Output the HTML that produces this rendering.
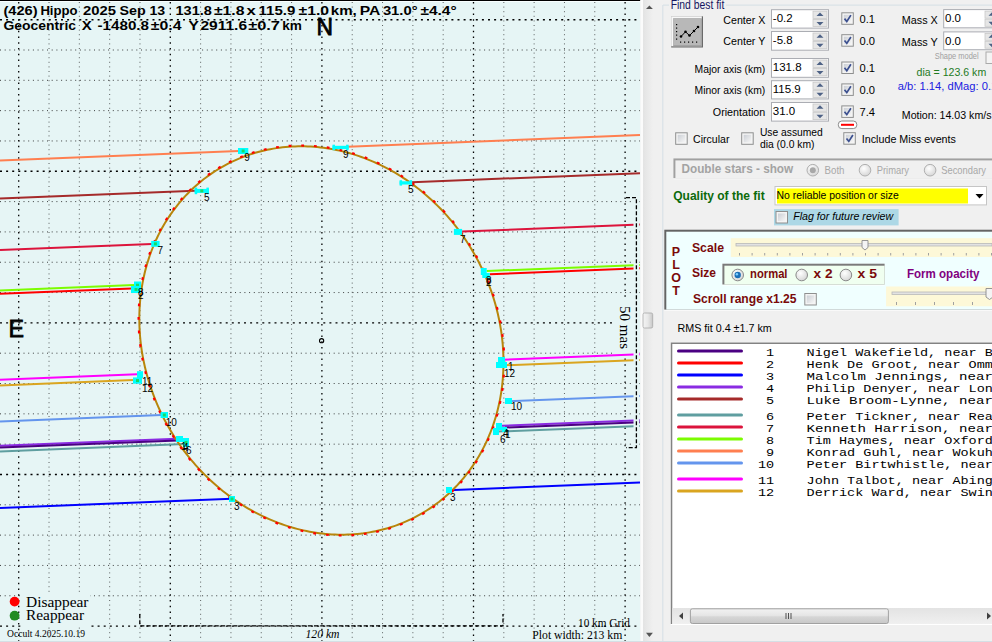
<!DOCTYPE html><html><head><meta charset="utf-8"><style>html,body{margin:0;padding:0;background:#f0f0f0;width:992px;height:642px;overflow:hidden}svg{display:block}</style></head><body>
<div style="position:relative;width:992px;height:642px">
<svg width="641" height="641" viewBox="0 0 641 641" style="position:absolute;left:0;top:0">
<rect x="0" y="0" width="640.5" height="641" fill="#e6f5f5"/>
<rect x="0" y="0" width="640.5" height="1" fill="#000"/>
<rect x="0" y="1" width="640.5" height="1" fill="#f8ffff"/>
<line x1="49.02" y1="2" x2="49.02" y2="641" stroke="#222" stroke-width="1" stroke-dasharray="1 3.6" opacity="0.7"/>
<line x1="0" y1="50" x2="640" y2="50" stroke="#222" stroke-width="1" stroke-dasharray="1 3.7" opacity="0.85"/>
<line x1="79.34" y1="2" x2="79.34" y2="641" stroke="#222" stroke-width="1" stroke-dasharray="1 3.6" opacity="0.7"/>
<line x1="0" y1="80.32" x2="640" y2="80.32" stroke="#222" stroke-width="1" stroke-dasharray="1 3.7" opacity="0.85"/>
<line x1="109.66" y1="2" x2="109.66" y2="641" stroke="#222" stroke-width="1" stroke-dasharray="1 3.6" opacity="0.7"/>
<line x1="0" y1="110.64" x2="640" y2="110.64" stroke="#222" stroke-width="1" stroke-dasharray="1 3.7" opacity="0.85"/>
<line x1="139.98" y1="2" x2="139.98" y2="641" stroke="#222" stroke-width="1" stroke-dasharray="1 3.6" opacity="0.7"/>
<line x1="0" y1="140.96" x2="640" y2="140.96" stroke="#222" stroke-width="1" stroke-dasharray="1 3.7" opacity="0.85"/>
<line x1="200.62" y1="2" x2="200.62" y2="641" stroke="#222" stroke-width="1" stroke-dasharray="1 3.6" opacity="0.7"/>
<line x1="0" y1="201.6" x2="640" y2="201.6" stroke="#222" stroke-width="1" stroke-dasharray="1 3.7" opacity="0.85"/>
<line x1="230.94" y1="2" x2="230.94" y2="641" stroke="#222" stroke-width="1" stroke-dasharray="1 3.6" opacity="0.7"/>
<line x1="0" y1="231.92" x2="640" y2="231.92" stroke="#222" stroke-width="1" stroke-dasharray="1 3.7" opacity="0.85"/>
<line x1="261.26" y1="2" x2="261.26" y2="641" stroke="#222" stroke-width="1" stroke-dasharray="1 3.6" opacity="0.7"/>
<line x1="0" y1="262.24" x2="640" y2="262.24" stroke="#222" stroke-width="1" stroke-dasharray="1 3.7" opacity="0.85"/>
<line x1="291.58" y1="2" x2="291.58" y2="641" stroke="#222" stroke-width="1" stroke-dasharray="1 3.6" opacity="0.7"/>
<line x1="0" y1="292.56" x2="640" y2="292.56" stroke="#222" stroke-width="1" stroke-dasharray="1 3.7" opacity="0.85"/>
<line x1="352.22" y1="2" x2="352.22" y2="641" stroke="#222" stroke-width="1" stroke-dasharray="1 3.6" opacity="0.7"/>
<line x1="0" y1="353.2" x2="640" y2="353.2" stroke="#222" stroke-width="1" stroke-dasharray="1 3.7" opacity="0.85"/>
<line x1="382.54" y1="2" x2="382.54" y2="641" stroke="#222" stroke-width="1" stroke-dasharray="1 3.6" opacity="0.7"/>
<line x1="0" y1="383.52" x2="640" y2="383.52" stroke="#222" stroke-width="1" stroke-dasharray="1 3.7" opacity="0.85"/>
<line x1="412.86" y1="2" x2="412.86" y2="641" stroke="#222" stroke-width="1" stroke-dasharray="1 3.6" opacity="0.7"/>
<line x1="0" y1="413.84" x2="640" y2="413.84" stroke="#222" stroke-width="1" stroke-dasharray="1 3.7" opacity="0.85"/>
<line x1="443.18" y1="2" x2="443.18" y2="641" stroke="#222" stroke-width="1" stroke-dasharray="1 3.6" opacity="0.7"/>
<line x1="0" y1="444.16" x2="640" y2="444.16" stroke="#222" stroke-width="1" stroke-dasharray="1 3.7" opacity="0.85"/>
<line x1="503.82" y1="2" x2="503.82" y2="641" stroke="#222" stroke-width="1" stroke-dasharray="1 3.6" opacity="0.7"/>
<line x1="0" y1="504.8" x2="640" y2="504.8" stroke="#222" stroke-width="1" stroke-dasharray="1 3.7" opacity="0.85"/>
<line x1="534.14" y1="2" x2="534.14" y2="641" stroke="#222" stroke-width="1" stroke-dasharray="1 3.6" opacity="0.7"/>
<line x1="0" y1="535.12" x2="640" y2="535.12" stroke="#222" stroke-width="1" stroke-dasharray="1 3.7" opacity="0.85"/>
<line x1="564.46" y1="2" x2="564.46" y2="641" stroke="#222" stroke-width="1" stroke-dasharray="1 3.6" opacity="0.7"/>
<line x1="0" y1="565.44" x2="640" y2="565.44" stroke="#222" stroke-width="1" stroke-dasharray="1 3.7" opacity="0.85"/>
<line x1="594.78" y1="2" x2="594.78" y2="641" stroke="#222" stroke-width="1" stroke-dasharray="1 3.6" opacity="0.7"/>
<line x1="0" y1="595.76" x2="640" y2="595.76" stroke="#222" stroke-width="1" stroke-dasharray="1 3.7" opacity="0.85"/>
<line x1="18.7" y1="2" x2="18.7" y2="641" stroke="#000" stroke-width="1.3" stroke-dasharray="1.5 4.25"/>
<line x1="0" y1="19.68" x2="640" y2="19.68" stroke="#000" stroke-width="1.4" stroke-dasharray="2 4.1"/>
<line x1="170.3" y1="2" x2="170.3" y2="641" stroke="#000" stroke-width="1.3" stroke-dasharray="1.5 4.25"/>
<line x1="0" y1="171.28" x2="640" y2="171.28" stroke="#000" stroke-width="1.4" stroke-dasharray="2 4.1"/>
<line x1="321.9" y1="2" x2="321.9" y2="641" stroke="#000" stroke-width="1.3" stroke-dasharray="1.5 4.25"/>
<line x1="0" y1="322.88" x2="640" y2="322.88" stroke="#000" stroke-width="1.4" stroke-dasharray="2 4.1"/>
<line x1="473.5" y1="2" x2="473.5" y2="641" stroke="#000" stroke-width="1.3" stroke-dasharray="1.5 4.25"/>
<line x1="0" y1="474.48" x2="640" y2="474.48" stroke="#000" stroke-width="1.4" stroke-dasharray="2 4.1"/>
<line x1="625.1" y1="2" x2="625.1" y2="641" stroke="#000" stroke-width="1.3" stroke-dasharray="1.5 4.25"/>
<line x1="0" y1="626.08" x2="640" y2="626.08" stroke="#000" stroke-width="1.4" stroke-dasharray="2 4.1"/>
<rect x="21" y="595" width="69" height="32" fill="#e6f5f5"/>
<rect x="613" y="300" width="20.5" height="57" fill="#e6f5f5"/>
<line x1="0" y1="160.5" x2="238.6" y2="151" stroke="#ff7f50" stroke-width="2"/>
<line x1="347.8" y1="146.66" x2="640" y2="135.03" stroke="#ff7f50" stroke-width="2"/>
<line x1="0" y1="198.6" x2="195" y2="190.84" stroke="#a52a2a" stroke-width="2"/>
<line x1="412.1" y1="182.2" x2="640" y2="173.13" stroke="#a52a2a" stroke-width="2"/>
<line x1="0" y1="250" x2="151.8" y2="243.96" stroke="#dc143c" stroke-width="2"/>
<line x1="462.1" y1="231.61" x2="640" y2="224.53" stroke="#dc143c" stroke-width="2"/>
<line x1="0" y1="290.4" x2="134" y2="285.07" stroke="#7cfc00" stroke-width="2"/>
<line x1="486.7" y1="271.03" x2="640" y2="264.93" stroke="#7cfc00" stroke-width="2"/>
<line x1="0" y1="293.8" x2="131.8" y2="288.55" stroke="#ff0000" stroke-width="2"/>
<line x1="489.8" y1="274.31" x2="640" y2="268.33" stroke="#ff0000" stroke-width="2"/>
<line x1="0" y1="379.8" x2="137.1" y2="374.34" stroke="#ff00ff" stroke-width="2"/>
<line x1="502.7" y1="359.79" x2="640" y2="354.33" stroke="#ff00ff" stroke-width="2"/>
<line x1="0" y1="385.4" x2="133" y2="380.11" stroke="#daa520" stroke-width="2"/>
<line x1="505" y1="365.3" x2="640" y2="359.93" stroke="#daa520" stroke-width="2"/>
<line x1="0" y1="421.5" x2="161.4" y2="415.08" stroke="#6495ed" stroke-width="2"/>
<line x1="508.3" y1="401.27" x2="640" y2="396.03" stroke="#6495ed" stroke-width="2"/>
<line x1="0" y1="445.7" x2="176.7" y2="438.67" stroke="#8a2be2" stroke-width="2"/>
<line x1="501.8" y1="425.73" x2="640" y2="420.23" stroke="#8a2be2" stroke-width="2"/>
<line x1="0" y1="447.6" x2="177.5" y2="440.54" stroke="#4b0082" stroke-width="2"/>
<line x1="505" y1="427.5" x2="640" y2="422.13" stroke="#4b0082" stroke-width="2"/>
<line x1="0" y1="451.4" x2="184.3" y2="444.06" stroke="#5f9ea0" stroke-width="2"/>
<line x1="498" y1="431.58" x2="640" y2="425.93" stroke="#5f9ea0" stroke-width="2"/>
<line x1="0" y1="508" x2="231.6" y2="498.78" stroke="#0000ff" stroke-width="2"/>
<line x1="448.4" y1="490.15" x2="640" y2="482.53" stroke="#0000ff" stroke-width="2"/>
<rect x="633.5" y="196" width="5.8" height="253" fill="#e6f5f5"/>
<path d="M626 197.7 H636.4 V447.6 H626" fill="none" stroke="#000" stroke-width="1.3" stroke-dasharray="4 2"/>
<path d="M221.4 167.29 L224.07 165.79 L226.77 164.33 L229.5 162.93 L232.26 161.59 L235.04 160.3 L237.85 159.06 L240.69 157.88 L243.55 156.75 L246.43 155.68 L249.34 154.67 L252.27 153.71 L255.22 152.81 L258.19 151.97 L261.18 151.19 L264.19 150.46 L267.21 149.79 L270.26 149.18 L273.31 148.63 L276.39 148.13 L279.47 147.69 L282.57 147.32 L285.68 147 L288.8 146.74 L291.93 146.54 L295.08 146.4 L298.22 146.31 L301.38 146.29 L304.54 146.33 L307.71 146.42 L310.88 146.57 L314.05 146.79 L317.23 147.06 L320.41 147.39 L323.58 147.78 L326.76 148.23 L329.94 148.74 L333.11 149.3 L336.28 149.93 L339.44 150.61 L342.6 151.35 L345.76 152.15 L348.9 153 L352.04 153.91 L355.17 154.88 L358.28 155.91 L361.39 156.99 L364.48 158.12 L367.56 159.32 L370.63 160.57 L373.68 161.87 L376.72 163.23 L379.74 164.64 L382.74 166.1 L385.72 167.62 L388.69 169.19 L391.63 170.81 L394.55 172.49 L397.45 174.21 L400.32 175.99 L403.17 177.82 L406 179.69 L408.8 181.62 L411.58 183.59 L414.32 185.61 L417.04 187.68 L419.73 189.8 L422.39 191.96 L425.02 194.16 L427.62 196.41 L430.18 198.71 L432.71 201.05 L435.21 203.43 L437.67 205.85 L440.1 208.31 L442.49 210.81 L444.85 213.36 L447.17 215.94 L449.44 218.56 L451.68 221.21 L453.88 223.91 L456.04 226.64 L458.16 229.4 L460.24 232.2 L462.27 235.03 L464.27 237.89 L466.21 240.78 L468.12 243.71 L469.98 246.66 L471.79 249.64 L473.56 252.65 L475.28 255.69 L476.96 258.75 L478.59 261.84 L480.17 264.95 L481.7 268.08 L483.18 271.24 L484.61 274.41 L486 277.61 L487.33 280.83 L488.61 284.06 L489.85 287.31 L491.03 290.58 L492.16 293.86 L493.23 297.16 L494.26 300.47 L495.23 303.79 L496.15 307.13 L497.02 310.47 L497.83 313.83 L498.59 317.19 L499.29 320.56 L499.94 323.93 L500.54 327.31 L501.08 330.69 L501.57 334.08 L502 337.47 L502.38 340.86 L502.7 344.25 L502.96 347.64 L503.17 351.02 L503.33 354.41 L503.43 357.78 L503.48 361.16 L503.47 364.52 L503.4 367.88 L503.28 371.24 L503.1 374.58 L502.87 377.91 L502.58 381.23 L502.24 384.54 L501.84 387.83 L501.39 391.11 L500.88 394.38 L500.32 397.62 L499.7 400.86 L499.03 404.07 L498.31 407.26 L497.53 410.43 L496.7 413.58 L495.81 416.71 L494.87 419.82 L493.88 422.9 L492.84 425.96 L491.74 428.99 L490.59 431.99 L489.39 434.97 L488.14 437.92 L486.84 440.83 L485.49 443.72 L484.08 446.58 L482.63 449.4 L481.13 452.19 L479.58 454.94 L477.98 457.66 L476.34 460.35 L474.64 463 L472.9 465.61 L471.12 468.18 L469.29 470.72 L467.41 473.21 L465.49 475.67 L463.53 478.08 L461.52 480.45 L459.47 482.78 L457.37 485.07 L455.24 487.31 L453.07 489.5 L450.85 491.66 L448.6 493.76 L446.3 495.82 L443.97 497.83 L441.6 499.79 L439.2 501.71 L436.76 503.57 L434.28 505.39 L431.77 507.16 L429.23 508.87 L426.65 510.53 L424.04 512.15 L421.4 513.71 L418.73 515.21 L416.03 516.67 L413.3 518.07 L410.54 519.41 L407.76 520.7 L404.95 521.94 L402.11 523.12 L399.25 524.25 L396.37 525.32 L393.46 526.33 L390.53 527.29 L387.58 528.19 L384.61 529.03 L381.62 529.81 L378.61 530.54 L375.59 531.21 L372.54 531.82 L369.49 532.37 L366.41 532.87 L363.33 533.31 L360.23 533.68 L357.12 534 L354 534.26 L350.87 534.46 L347.72 534.6 L344.58 534.69 L341.42 534.71 L338.26 534.67 L335.09 534.58 L331.92 534.42 L328.75 534.21 L325.57 533.94 L322.39 533.61 L319.22 533.22 L316.04 532.77 L312.86 532.26 L309.69 531.7 L306.52 531.07 L303.36 530.39 L300.2 529.65 L297.04 528.85 L293.9 528 L290.76 527.09 L287.63 526.12 L284.52 525.09 L281.41 524.01 L278.32 522.88 L275.24 521.68 L272.17 520.43 L269.12 519.13 L266.08 517.77 L263.06 516.36 L260.06 514.9 L257.08 513.38 L254.11 511.81 L251.17 510.19 L248.25 508.51 L245.35 506.79 L242.48 505.01 L239.63 503.18 L236.8 501.31 L234 499.38 L231.22 497.41 L228.48 495.39 L225.76 493.32 L223.07 491.2 L220.41 489.04 L217.78 486.84 L215.18 484.59 L212.62 482.29 L210.09 479.95 L207.59 477.57 L205.13 475.15 L202.7 472.69 L200.31 470.19 L197.95 467.64 L195.63 465.06 L193.36 462.44 L191.12 459.79 L188.92 457.09 L186.76 454.36 L184.64 451.6 L182.56 448.8 L180.53 445.97 L178.53 443.11 L176.59 440.22 L174.68 437.29 L172.82 434.34 L171.01 431.36 L169.24 428.35 L167.52 425.31 L165.84 422.25 L164.21 419.16 L162.63 416.05 L161.1 412.92 L159.62 409.76 L158.19 406.59 L156.8 403.39 L155.47 400.17 L154.19 396.94 L152.95 393.69 L151.77 390.42 L150.64 387.14 L149.57 383.84 L148.54 380.53 L147.57 377.21 L146.65 373.87 L145.78 370.53 L144.97 367.17 L144.21 363.81 L143.51 360.44 L142.86 357.07 L142.26 353.69 L141.72 350.31 L141.23 346.92 L140.8 343.53 L140.42 340.14 L140.1 336.75 L139.84 333.36 L139.62 329.98 L139.47 326.59 L139.37 323.22 L139.32 319.84 L139.33 316.48 L139.4 313.12 L139.52 309.76 L139.7 306.42 L139.93 303.09 L140.22 299.77 L140.56 296.46 L140.96 293.17 L141.41 289.89 L141.92 286.62 L142.48 283.38 L143.1 280.14 L143.77 276.93 L144.49 273.74 L145.27 270.57 L146.1 267.42 L146.99 264.29 L147.93 261.18 L148.92 258.1 L149.96 255.04 L151.06 252.01 L152.21 249.01 L153.41 246.03 L154.66 243.08 L155.96 240.17 L157.31 237.28 L158.72 234.43 L160.17 231.6 L161.67 228.81 L163.22 226.06 L164.82 223.34 L166.46 220.65 L168.16 218 L169.9 215.39 L171.68 212.82 L173.51 210.28 L175.39 207.79 L177.31 205.33 L179.27 202.92 L181.28 200.55 L183.33 198.22 L185.43 195.93 L187.56 193.69 L189.73 191.5 L191.95 189.34 L194.2 187.24 L196.5 185.18 L198.83 183.17 L201.2 181.21 L203.6 179.29 L206.04 177.43 L208.52 175.61 L211.03 173.84 L213.57 172.13 L216.15 170.47 L218.76 168.85Z" fill="none" stroke="#b8860b" stroke-width="2"/>
<rect x="228.89" y="160.55" width="2.8" height="2.2" fill="#ff0000" transform="rotate(-25.98 230.29 161.65)"/>
<rect x="240.17" y="155.57" width="2.8" height="2.2" fill="#ff0000" transform="rotate(-21.44 241.57 156.67)"/>
<rect x="251.84" y="151.48" width="2.8" height="2.2" fill="#ff0000" transform="rotate(-16.92 253.24 152.58)"/>
<rect x="263.83" y="148.31" width="2.8" height="2.2" fill="#ff0000" transform="rotate(-12.44 265.23 149.41)"/>
<rect x="276.11" y="146.07" width="2.8" height="2.2" fill="#ff0000" transform="rotate(-8.01 277.51 147.17)"/>
<rect x="288.59" y="144.77" width="2.8" height="2.2" fill="#ff0000" transform="rotate(-3.63 289.99 145.87)"/>
<rect x="301.23" y="144.42" width="2.8" height="2.2" fill="#ff0000" transform="rotate(0.69 302.63 145.52)"/>
<rect x="313.96" y="145.02" width="2.8" height="2.2" fill="#ff0000" transform="rotate(4.93 315.36 146.12)"/>
<rect x="326.72" y="146.57" width="2.8" height="2.2" fill="#ff0000" transform="rotate(9.11 328.12 147.67)"/>
<rect x="339.45" y="149.05" width="2.8" height="2.2" fill="#ff0000" transform="rotate(13.21 340.85 150.15)"/>
<rect x="352.08" y="152.47" width="2.8" height="2.2" fill="#ff0000" transform="rotate(17.24 353.48 153.57)"/>
<rect x="364.56" y="156.79" width="2.8" height="2.2" fill="#ff0000" transform="rotate(21.2 365.96 157.89)"/>
<rect x="376.82" y="162.01" width="2.8" height="2.2" fill="#ff0000" transform="rotate(25.09 378.22 163.11)"/>
<rect x="388.8" y="168.08" width="2.8" height="2.2" fill="#ff0000" transform="rotate(28.91 390.2 169.18)"/>
<rect x="400.44" y="175" width="2.8" height="2.2" fill="#ff0000" transform="rotate(32.67 401.84 176.1)"/>
<rect x="411.7" y="182.71" width="2.8" height="2.2" fill="#ff0000" transform="rotate(36.38 413.1 183.81)"/>
<rect x="422.51" y="191.19" width="2.8" height="2.2" fill="#ff0000" transform="rotate(40.04 423.91 192.29)"/>
<rect x="432.82" y="200.39" width="2.8" height="2.2" fill="#ff0000" transform="rotate(43.65 434.22 201.49)"/>
<rect x="442.58" y="210.26" width="2.8" height="2.2" fill="#ff0000" transform="rotate(47.23 443.98 211.36)"/>
<rect x="451.74" y="220.77" width="2.8" height="2.2" fill="#ff0000" transform="rotate(50.78 453.14 221.87)"/>
<rect x="460.26" y="231.85" width="2.8" height="2.2" fill="#ff0000" transform="rotate(54.31 461.66 232.95)"/>
<rect x="468.1" y="243.46" width="2.8" height="2.2" fill="#ff0000" transform="rotate(57.83 469.5 244.56)"/>
<rect x="475.21" y="255.54" width="2.8" height="2.2" fill="#ff0000" transform="rotate(61.35 476.61 256.64)"/>
<rect x="481.57" y="268.02" width="2.8" height="2.2" fill="#ff0000" transform="rotate(64.87 482.97 269.12)"/>
<rect x="487.14" y="280.85" width="2.8" height="2.2" fill="#ff0000" transform="rotate(68.39 488.54 281.95)"/>
<rect x="491.9" y="293.97" width="2.8" height="2.2" fill="#ff0000" transform="rotate(71.94 493.3 295.07)"/>
<rect x="495.82" y="307.3" width="2.8" height="2.2" fill="#ff0000" transform="rotate(75.51 497.22 308.4)"/>
<rect x="498.88" y="320.8" width="2.8" height="2.2" fill="#ff0000" transform="rotate(79.12 500.28 321.9)"/>
<rect x="501.08" y="334.38" width="2.8" height="2.2" fill="#ff0000" transform="rotate(82.77 502.48 335.48)"/>
<rect x="502.39" y="347.99" width="2.8" height="2.2" fill="#ff0000" transform="rotate(86.46 503.79 349.09)"/>
<rect x="502.81" y="361.56" width="2.8" height="2.2" fill="#ff0000" transform="rotate(90.21 504.21 362.66)"/>
<rect x="502.34" y="375.02" width="2.8" height="2.2" fill="#ff0000" transform="rotate(94.02 503.74 376.12)"/>
<rect x="500.98" y="388.31" width="2.8" height="2.2" fill="#ff0000" transform="rotate(97.89 502.38 389.41)"/>
<rect x="498.74" y="401.35" width="2.8" height="2.2" fill="#ff0000" transform="rotate(101.83 500.14 402.45)"/>
<rect x="495.63" y="414.1" width="2.8" height="2.2" fill="#ff0000" transform="rotate(105.84 497.03 415.2)"/>
<rect x="491.67" y="426.48" width="2.8" height="2.2" fill="#ff0000" transform="rotate(109.93 493.07 427.58)"/>
<rect x="486.86" y="438.44" width="2.8" height="2.2" fill="#ff0000" transform="rotate(114.09 488.26 439.54)"/>
<rect x="481.25" y="449.91" width="2.8" height="2.2" fill="#ff0000" transform="rotate(118.32 482.65 451.01)"/>
<rect x="474.85" y="460.85" width="2.8" height="2.2" fill="#ff0000" transform="rotate(122.62 476.25 461.95)"/>
<rect x="467.69" y="471.2" width="2.8" height="2.2" fill="#ff0000" transform="rotate(126.98 469.09 472.3)"/>
<rect x="459.82" y="480.9" width="2.8" height="2.2" fill="#ff0000" transform="rotate(131.41 461.22 482)"/>
<rect x="451.26" y="489.91" width="2.8" height="2.2" fill="#ff0000" transform="rotate(135.88 452.66 491.01)"/>
<rect x="442.07" y="498.19" width="2.8" height="2.2" fill="#ff0000" transform="rotate(140.38 443.47 499.29)"/>
<rect x="432.28" y="505.7" width="2.8" height="2.2" fill="#ff0000" transform="rotate(144.92 433.68 506.8)"/>
<rect x="421.94" y="512.4" width="2.8" height="2.2" fill="#ff0000" transform="rotate(149.47 423.34 513.5)"/>
<rect x="411.11" y="518.25" width="2.8" height="2.2" fill="#ff0000" transform="rotate(154.02 412.51 519.35)"/>
<rect x="399.83" y="523.23" width="2.8" height="2.2" fill="#ff0000" transform="rotate(158.56 401.23 524.33)"/>
<rect x="388.16" y="527.32" width="2.8" height="2.2" fill="#ff0000" transform="rotate(163.08 389.56 528.42)"/>
<rect x="376.17" y="530.49" width="2.8" height="2.2" fill="#ff0000" transform="rotate(167.56 377.57 531.59)"/>
<rect x="363.89" y="532.73" width="2.8" height="2.2" fill="#ff0000" transform="rotate(171.99 365.29 533.83)"/>
<rect x="351.41" y="534.03" width="2.8" height="2.2" fill="#ff0000" transform="rotate(176.37 352.81 535.13)"/>
<rect x="338.77" y="534.38" width="2.8" height="2.2" fill="#ff0000" transform="rotate(-179.31 340.17 535.48)"/>
<rect x="326.04" y="533.78" width="2.8" height="2.2" fill="#ff0000" transform="rotate(-175.07 327.44 534.88)"/>
<rect x="313.28" y="532.23" width="2.8" height="2.2" fill="#ff0000" transform="rotate(-170.89 314.68 533.33)"/>
<rect x="300.55" y="529.75" width="2.8" height="2.2" fill="#ff0000" transform="rotate(-166.79 301.95 530.85)"/>
<rect x="287.92" y="526.33" width="2.8" height="2.2" fill="#ff0000" transform="rotate(-162.76 289.32 527.43)"/>
<rect x="275.44" y="522.01" width="2.8" height="2.2" fill="#ff0000" transform="rotate(-158.8 276.84 523.11)"/>
<rect x="263.18" y="516.79" width="2.8" height="2.2" fill="#ff0000" transform="rotate(-154.91 264.58 517.89)"/>
<rect x="251.2" y="510.72" width="2.8" height="2.2" fill="#ff0000" transform="rotate(-151.09 252.6 511.82)"/>
<rect x="239.56" y="503.8" width="2.8" height="2.2" fill="#ff0000" transform="rotate(-147.33 240.96 504.9)"/>
<rect x="228.3" y="496.09" width="2.8" height="2.2" fill="#ff0000" transform="rotate(-143.62 229.7 497.19)"/>
<rect x="217.49" y="487.61" width="2.8" height="2.2" fill="#ff0000" transform="rotate(-139.96 218.89 488.71)"/>
<rect x="207.18" y="478.41" width="2.8" height="2.2" fill="#ff0000" transform="rotate(-136.35 208.58 479.51)"/>
<rect x="197.42" y="468.54" width="2.8" height="2.2" fill="#ff0000" transform="rotate(-132.77 198.82 469.64)"/>
<rect x="188.26" y="458.03" width="2.8" height="2.2" fill="#ff0000" transform="rotate(-129.22 189.66 459.13)"/>
<rect x="179.74" y="446.95" width="2.8" height="2.2" fill="#ff0000" transform="rotate(-125.69 181.14 448.05)"/>
<rect x="171.9" y="435.34" width="2.8" height="2.2" fill="#ff0000" transform="rotate(-122.17 173.3 436.44)"/>
<rect x="164.79" y="423.26" width="2.8" height="2.2" fill="#ff0000" transform="rotate(-118.65 166.19 424.36)"/>
<rect x="158.43" y="410.78" width="2.8" height="2.2" fill="#ff0000" transform="rotate(-115.13 159.83 411.88)"/>
<rect x="152.86" y="397.95" width="2.8" height="2.2" fill="#ff0000" transform="rotate(-111.61 154.26 399.05)"/>
<rect x="148.1" y="384.83" width="2.8" height="2.2" fill="#ff0000" transform="rotate(-108.06 149.5 385.93)"/>
<rect x="144.18" y="371.5" width="2.8" height="2.2" fill="#ff0000" transform="rotate(-104.49 145.58 372.6)"/>
<rect x="141.12" y="358" width="2.8" height="2.2" fill="#ff0000" transform="rotate(-100.88 142.52 359.1)"/>
<rect x="138.92" y="344.42" width="2.8" height="2.2" fill="#ff0000" transform="rotate(-97.23 140.32 345.52)"/>
<rect x="137.61" y="330.81" width="2.8" height="2.2" fill="#ff0000" transform="rotate(-93.54 139.01 331.91)"/>
<rect x="137.19" y="317.24" width="2.8" height="2.2" fill="#ff0000" transform="rotate(-89.79 138.59 318.34)"/>
<rect x="137.66" y="303.78" width="2.8" height="2.2" fill="#ff0000" transform="rotate(-85.98 139.06 304.88)"/>
<rect x="139.02" y="290.49" width="2.8" height="2.2" fill="#ff0000" transform="rotate(-82.11 140.42 291.59)"/>
<rect x="141.26" y="277.45" width="2.8" height="2.2" fill="#ff0000" transform="rotate(-78.17 142.66 278.55)"/>
<rect x="144.37" y="264.7" width="2.8" height="2.2" fill="#ff0000" transform="rotate(-74.16 145.77 265.8)"/>
<rect x="148.33" y="252.32" width="2.8" height="2.2" fill="#ff0000" transform="rotate(-70.07 149.73 253.42)"/>
<rect x="153.14" y="240.36" width="2.8" height="2.2" fill="#ff0000" transform="rotate(-65.91 154.54 241.46)"/>
<rect x="158.75" y="228.89" width="2.8" height="2.2" fill="#ff0000" transform="rotate(-61.68 160.15 229.99)"/>
<rect x="165.15" y="217.95" width="2.8" height="2.2" fill="#ff0000" transform="rotate(-57.38 166.55 219.05)"/>
<rect x="172.31" y="207.6" width="2.8" height="2.2" fill="#ff0000" transform="rotate(-53.02 173.71 208.7)"/>
<rect x="180.18" y="197.9" width="2.8" height="2.2" fill="#ff0000" transform="rotate(-48.59 181.58 199)"/>
<rect x="188.74" y="188.89" width="2.8" height="2.2" fill="#ff0000" transform="rotate(-44.12 190.14 189.99)"/>
<rect x="197.93" y="180.61" width="2.8" height="2.2" fill="#ff0000" transform="rotate(-39.62 199.33 181.71)"/>
<rect x="207.72" y="173.1" width="2.8" height="2.2" fill="#ff0000" transform="rotate(-35.08 209.12 174.2)"/>
<rect x="218.06" y="166.4" width="2.8" height="2.2" fill="#ff0000" transform="rotate(-30.53 219.46 167.5)"/>
<circle cx="321.6" cy="340.7" r="2.1" fill="none" stroke="#000" stroke-width="1.1"/>
</svg>
<svg width="992" height="642" style="position:absolute;left:0;top:0">
<rect x="238" y="148" width="10.3" height="6" fill="#00ffff"/>
<rect x="241.65" y="149.5" width="3" height="3" fill="#22cc22" opacity="0.7"/>
<rect x="332.5" y="144.7" width="2.5" height="5.5" fill="#00ffff"/>
<rect x="346.1" y="144.7" width="2.5" height="5.5" fill="#00ffff"/>
<rect x="332.5" y="145.8" width="16.1" height="3.3" fill="#00ffff"/>
<rect x="194.7" y="187.6" width="2.5" height="6.6" fill="#00ffff"/>
<rect x="206.4" y="187.6" width="2.5" height="6.6" fill="#00ffff"/>
<rect x="194.7" y="188.92" width="14.2" height="3.96" fill="#00ffff"/>
<rect x="200.3" y="189.4" width="3" height="3" fill="#22cc22" opacity="0.7"/>
<rect x="399.6" y="180.2" width="2.5" height="5.4" fill="#00ffff"/>
<rect x="409.6" y="180.2" width="2.5" height="5.4" fill="#00ffff"/>
<rect x="399.6" y="181.28" width="12.5" height="3.24" fill="#00ffff"/>
<rect x="151.2" y="240.9" width="8.4" height="5.9" fill="#00ffff"/>
<rect x="153.9" y="242.35" width="3" height="3" fill="#22cc22" opacity="0.7"/>
<rect x="453.9" y="228.9" width="8.2" height="6" fill="#00ffff"/>
<rect x="134" y="281.5" width="7" height="7.5" fill="#00ffff"/>
<rect x="136" y="283.75" width="3" height="3" fill="#22cc22" opacity="0.7"/>
<rect x="131" y="286" width="10" height="7" fill="#00ffff"/>
<rect x="134.5" y="288" width="3" height="3" fill="#22cc22" opacity="0.7"/>
<rect x="480.8" y="268" width="5.9" height="7" fill="#00ffff"/>
<rect x="482.3" y="273" width="7.5" height="5" fill="#00ffff"/>
<rect x="137" y="371.2" width="6" height="6.8" fill="#00ffff"/>
<rect x="133" y="377.4" width="9" height="6.3" fill="#00ffff"/>
<rect x="136" y="379.05" width="3" height="3" fill="#22cc22" opacity="0.7"/>
<rect x="498" y="357" width="7" height="5" fill="#00ffff"/>
<rect x="496" y="362" width="11" height="6" fill="#00ffff"/>
<rect x="160.6" y="412" width="7.4" height="6" fill="#00ffff"/>
<rect x="162.8" y="413.5" width="3" height="3" fill="#22cc22" opacity="0.7"/>
<rect x="505" y="398" width="7" height="6" fill="#00ffff"/>
<rect x="176" y="436" width="7" height="6" fill="#00ffff"/>
<rect x="183" y="438" width="6" height="9" fill="#00ffff"/>
<rect x="184.5" y="441" width="3" height="3" fill="#22cc22" opacity="0.7"/>
<rect x="496" y="423" width="6" height="7" fill="#00ffff"/>
<rect x="493" y="428" width="6" height="7" fill="#00ffff"/>
<rect x="502" y="427" width="5" height="5" fill="#00ffff"/>
<rect x="229" y="496" width="6" height="6" fill="#00ffff"/>
<rect x="230.5" y="497.5" width="3" height="3" fill="#22cc22" opacity="0.7"/>
<rect x="446" y="487" width="6" height="6" fill="#00ffff"/>
<text x="244.2" y="161.3" font-family="Liberation Sans" font-size="10" fill="#000">9</text>
<text x="342.9" y="158.3" font-family="Liberation Sans" font-size="10" fill="#000">9</text>
<text x="203.9" y="201.2" font-family="Liberation Sans" font-size="10" fill="#000">5</text>
<text x="408.1" y="193.2" font-family="Liberation Sans" font-size="10" fill="#000">5</text>
<text x="157.4" y="254.4" font-family="Liberation Sans" font-size="10" fill="#000">7</text>
<text x="459.9" y="242.5" font-family="Liberation Sans" font-size="10" fill="#000">7</text>
<text x="138" y="296" font-family="Liberation Sans" font-size="10" fill="#000">8</text>
<text x="138" y="298.5" font-family="Liberation Sans" font-size="10" fill="#000">2</text>
<text x="486" y="284" font-family="Liberation Sans" font-size="10" fill="#000">8</text>
<text x="486" y="286" font-family="Liberation Sans" font-size="10" fill="#000">2</text>
<text x="142" y="385" font-family="Liberation Sans" font-size="10" fill="#000">11</text>
<text x="142" y="392" font-family="Liberation Sans" font-size="10" fill="#000">12</text>
<text x="504" y="377" font-family="Liberation Sans" font-size="10" fill="#000">12</text>
<text x="508" y="370" font-family="Liberation Sans" font-size="10" fill="#000">1</text>
<text x="165.8" y="426" font-family="Liberation Sans" font-size="10" fill="#000">10</text>
<text x="511" y="409.5" font-family="Liberation Sans" font-size="10" fill="#000">10</text>
<text x="186" y="453.5" font-family="Liberation Sans" font-size="10" fill="#000">6</text>
<text x="183" y="451" font-family="Liberation Sans" font-size="10" fill="#000">4</text>
<text x="181" y="450" font-family="Liberation Sans" font-size="10" fill="#000">1</text>
<text x="500" y="443" font-family="Liberation Sans" font-size="10" fill="#000">6</text>
<text x="505" y="438" font-family="Liberation Sans" font-size="10" fill="#000">1</text>
<text x="503" y="437" font-family="Liberation Sans" font-size="10" fill="#000">4</text>
<text x="234" y="510" font-family="Liberation Sans" font-size="10" fill="#000">3</text>
<text x="450" y="500.5" font-family="Liberation Sans" font-size="10" fill="#000">3</text>
<text x="3.4" y="14.6" font-family="Liberation Sans" font-size="13" font-weight="bold" font-style="normal" fill="#000" text-anchor="start" textLength="34.2" lengthAdjust="spacingAndGlyphs">(426)</text>
<text x="40.4" y="14.6" font-family="Liberation Sans" font-size="13" font-weight="bold" font-style="normal" fill="#000" text-anchor="start" textLength="37.2" lengthAdjust="spacingAndGlyphs">Hippo</text>
<text x="82.9" y="14.6" font-family="Liberation Sans" font-size="13" font-weight="bold" font-style="normal" fill="#000" text-anchor="start" textLength="33" lengthAdjust="spacingAndGlyphs">2025</text>
<text x="119.6" y="14.6" font-family="Liberation Sans" font-size="13" font-weight="bold" font-style="normal" fill="#000" text-anchor="start" textLength="26.2" lengthAdjust="spacingAndGlyphs">Sep</text>
<text x="149.4" y="14.6" font-family="Liberation Sans" font-size="13" font-weight="bold" font-style="normal" fill="#000" text-anchor="start" textLength="15.7" lengthAdjust="spacingAndGlyphs">13</text>
<text x="175.5" y="14.6" font-family="Liberation Sans" font-size="13" font-weight="bold" font-style="normal" fill="#000" text-anchor="start" textLength="36.4" lengthAdjust="spacingAndGlyphs">131.8</text>
<text x="213.9" y="14.6" font-family="Liberation Sans" font-size="13" font-weight="bold" font-style="normal" fill="#000" text-anchor="start" textLength="30.6" lengthAdjust="spacingAndGlyphs">±1.8</text>
<text x="246.5" y="14.6" font-family="Liberation Sans" font-size="13" font-weight="bold" font-style="normal" fill="#000" text-anchor="start" textLength="9.3" lengthAdjust="spacingAndGlyphs">x</text>
<text x="258.6" y="14.6" font-family="Liberation Sans" font-size="13" font-weight="bold" font-style="normal" fill="#000" text-anchor="start" textLength="36.7" lengthAdjust="spacingAndGlyphs">115.9</text>
<text x="298.5" y="14.6" font-family="Liberation Sans" font-size="13" font-weight="bold" font-style="normal" fill="#000" text-anchor="start" textLength="30.6" lengthAdjust="spacingAndGlyphs">±1.0</text>
<text x="330.8" y="14.6" font-family="Liberation Sans" font-size="13" font-weight="bold" font-style="normal" fill="#000" text-anchor="start" textLength="26" lengthAdjust="spacingAndGlyphs">km,</text>
<text x="359.8" y="14.6" font-family="Liberation Sans" font-size="13" font-weight="bold" font-style="normal" fill="#000" text-anchor="start" textLength="20.6" lengthAdjust="spacingAndGlyphs">PA</text>
<text x="382.9" y="14.6" font-family="Liberation Sans" font-size="13" font-weight="bold" font-style="normal" fill="#000" text-anchor="start" textLength="34.7" lengthAdjust="spacingAndGlyphs">31.0°</text>
<text x="420.4" y="14.6" font-family="Liberation Sans" font-size="13" font-weight="bold" font-style="normal" fill="#000" text-anchor="start" textLength="36.3" lengthAdjust="spacingAndGlyphs">±4.4°</text>
<text x="3.4" y="30.4" font-family="Liberation Sans" font-size="13" font-weight="bold" font-style="normal" fill="#000" text-anchor="start" textLength="72.7" lengthAdjust="spacingAndGlyphs">Geocentric</text>
<text x="81.7" y="30.4" font-family="Liberation Sans" font-size="13" font-weight="bold" font-style="normal" fill="#000" text-anchor="start" textLength="10" lengthAdjust="spacingAndGlyphs">X</text>
<text x="97.5" y="30.4" font-family="Liberation Sans" font-size="13" font-weight="bold" font-style="normal" fill="#000" text-anchor="start" textLength="51.5" lengthAdjust="spacingAndGlyphs">-1480.8</text>
<text x="150.8" y="30.4" font-family="Liberation Sans" font-size="13" font-weight="bold" font-style="normal" fill="#000" text-anchor="start" textLength="30.7" lengthAdjust="spacingAndGlyphs">±0.4</text>
<text x="188.4" y="30.4" font-family="Liberation Sans" font-size="13" font-weight="bold" font-style="normal" fill="#000" text-anchor="start" textLength="10.4" lengthAdjust="spacingAndGlyphs">Y</text>
<text x="200.4" y="30.4" font-family="Liberation Sans" font-size="13" font-weight="bold" font-style="normal" fill="#000" text-anchor="start" textLength="46.7" lengthAdjust="spacingAndGlyphs">2911.6</text>
<text x="248.2" y="30.4" font-family="Liberation Sans" font-size="13" font-weight="bold" font-style="normal" fill="#000" text-anchor="start" textLength="31.8" lengthAdjust="spacingAndGlyphs">±0.7</text>
<text x="282.3" y="30.4" font-family="Liberation Sans" font-size="13" font-weight="bold" font-style="normal" fill="#000" text-anchor="start" textLength="19.7" lengthAdjust="spacingAndGlyphs">km</text>
<text x="316.6" y="35" font-family="Liberation Sans" font-size="24" font-weight="normal" font-style="normal" fill="#000" text-anchor="start" stroke="#000" stroke-width="0.8" textLength="16.5" lengthAdjust="spacingAndGlyphs">N</text>
<text x="8.6" y="337" font-family="Liberation Sans" font-size="24" font-weight="normal" font-style="normal" fill="#000" text-anchor="start" stroke="#000" stroke-width="0.8" textLength="15.5" lengthAdjust="spacingAndGlyphs">E</text>
<circle cx="14.6" cy="601.6" r="4.9" fill="#ff0000"/>
<circle cx="14.6" cy="615.7" r="4.9" fill="#228b22"/>
<text x="26" y="606.6" font-family="Liberation Serif" font-size="14.5" font-weight="normal" font-style="normal" fill="#000" text-anchor="start" textLength="62.5" lengthAdjust="spacingAndGlyphs">Disappear</text>
<text x="26" y="620.2" font-family="Liberation Serif" font-size="14.5" font-weight="normal" font-style="normal" fill="#000" text-anchor="start" textLength="58" lengthAdjust="spacingAndGlyphs">Reappear</text>
<text x="7" y="636.9" font-family="Liberation Serif" font-size="10.5" font-weight="normal" font-style="normal" fill="#000" text-anchor="start" textLength="78" lengthAdjust="spacingAndGlyphs">Occult 4.2025.10.19</text>
<path d="M139.8 614 V625.8 H503 V614" fill="none" stroke="#000" stroke-width="1.3" stroke-dasharray="4 2.2"/>
<text x="305.5" y="638" font-family="Liberation Serif" font-size="12" font-weight="normal" font-style="italic" fill="#000" text-anchor="start" textLength="34" lengthAdjust="spacingAndGlyphs">120 km</text>
<text x="578" y="627" font-family="Liberation Serif" font-size="12" font-weight="normal" font-style="normal" fill="#000" text-anchor="start" textLength="52" lengthAdjust="spacingAndGlyphs">10 km Grid</text>
<text x="532.3" y="638.5" font-family="Liberation Serif" font-size="12" font-weight="normal" font-style="normal" fill="#000" text-anchor="start" textLength="90" lengthAdjust="spacingAndGlyphs">Plot width: 213 km</text>
<text x="619.8" y="306" font-family="Liberation Serif" font-size="15" font-weight="normal" font-style="normal" fill="#000" text-anchor="start" transform="rotate(90 619.8 306)" textLength="43" lengthAdjust="spacingAndGlyphs">50 mas</text>
<defs><linearGradient id="cbg" x1="0" y1="0" x2="1" y2="1"><stop offset="0" stop-color="#cbcfd5"/><stop offset="1" stop-color="#f6f6f6"/></linearGradient><radialGradient id="rbg" cx="0.4" cy="0.35" r="0.7"><stop offset="0" stop-color="#ffffff"/><stop offset="1" stop-color="#d4d4d4"/></radialGradient><linearGradient id="sbv" x1="0" y1="0" x2="1" y2="0"><stop offset="0" stop-color="#e3e3e3"/><stop offset="1" stop-color="#f0f0f0"/></linearGradient><linearGradient id="thv" x1="0" y1="0" x2="1" y2="0"><stop offset="0" stop-color="#f4f4f4"/><stop offset="0.5" stop-color="#e8e8e8"/><stop offset="1" stop-color="#c8c8c8"/></linearGradient><linearGradient id="thh" x1="0" y1="0" x2="0" y2="1"><stop offset="0" stop-color="#f2f2f2"/><stop offset="0.45" stop-color="#e6e6e6"/><stop offset="0.55" stop-color="#d6d6d6"/><stop offset="1" stop-color="#c8c8c8"/></linearGradient><linearGradient id="sbh" x1="0" y1="0" x2="0" y2="1"><stop offset="0" stop-color="#e3e3e3"/><stop offset="1" stop-color="#f0f0f0"/></linearGradient></defs>
<rect x="640.5" y="0" width="351.5" height="642" fill="#f0f0f0" />
<rect x="640.5" y="0" width="2.5" height="642" fill="#fbfbfb" />
<rect x="643" y="0" width="10" height="642" fill="url(#sbv)" />
<path d="M646 9 L649.4 5.5 L652.9 9Z" fill="#555"/>
<path d="M646 632.8 L649.4 636.9 L652.9 632.8Z" fill="#555"/>
<rect x="643" y="313" width="9.7" height="15" fill="url(#thv)" stroke="#a8a8a8" stroke-width="0.8" rx="1.5"/>
<rect x="0" y="641" width="992" height="1" fill="#d5dfe5" />
<rect x="662.3" y="5" width="1" height="636" fill="#d5dfe5" />
<rect x="663" y="4.6" width="6" height="1" fill="#d5dfe5" />
<rect x="726" y="4.6" width="266" height="1" fill="#d5dfe5" />
<text x="670.7" y="8.8" font-family="Liberation Sans" font-size="12.5" font-weight="normal" font-style="normal" fill="#151560" text-anchor="start" textLength="53.6" lengthAdjust="spacingAndGlyphs" >Find best fit</text>
<rect x="671.2" y="16.3" width="31.8" height="31.2" fill="#6a6a6a" />
<rect x="671.2" y="16.3" width="30.6" height="30" fill="#f8f8f8" />
<rect x="673.2" y="18.3" width="28.6" height="28" fill="#9a9a9a" />
<rect x="673.2" y="18.3" width="27.6" height="27" fill="#b8b8b8" />
<rect x="676" y="24" width="1.2" height="1.2" fill="#000" />
<rect x="676" y="27.5" width="1.2" height="1.2" fill="#000" />
<rect x="676" y="31" width="1.2" height="1.2" fill="#000" />
<rect x="676" y="34.5" width="1.2" height="1.2" fill="#000" />
<rect x="676" y="38.5" width="1.2" height="1.2" fill="#000" />
<rect x="680" y="41.5" width="1.2" height="1.2" fill="#000" />
<rect x="684" y="41.5" width="1.2" height="1.2" fill="#000" />
<rect x="688" y="41.5" width="1.2" height="1.2" fill="#000" />
<rect x="692" y="41.5" width="1.2" height="1.2" fill="#000" />
<rect x="696" y="41.5" width="1.2" height="1.2" fill="#000" />
<path d="M681 36.5 L685.5 31.8 L689.5 35.5 L694 31 L698 27" fill="none" stroke="#000" stroke-width="1"/>
<circle cx="681" cy="36.5" r="1.3" fill="#000"/>
<circle cx="685.5" cy="31.8" r="1.3" fill="#000"/>
<circle cx="689.5" cy="35.5" r="1.3" fill="#000"/>
<circle cx="694" cy="31" r="1.3" fill="#000"/>
<circle cx="698" cy="27" r="1.3" fill="#000"/>
<text x="723.3" y="23.6" font-family="Liberation Sans" font-size="11.5" font-weight="normal" font-style="normal" fill="#000" text-anchor="start" textLength="42" lengthAdjust="spacingAndGlyphs" >Center X</text>
<text x="723.3" y="45.4" font-family="Liberation Sans" font-size="11.5" font-weight="normal" font-style="normal" fill="#000" text-anchor="start" textLength="42" lengthAdjust="spacingAndGlyphs" >Center Y</text>
<text x="694.5" y="72.6" font-family="Liberation Sans" font-size="11.5" font-weight="normal" font-style="normal" fill="#000" text-anchor="start" textLength="70.8" lengthAdjust="spacingAndGlyphs" >Major axis (km)</text>
<text x="694.5" y="94.4" font-family="Liberation Sans" font-size="11.5" font-weight="normal" font-style="normal" fill="#000" text-anchor="start" textLength="70.8" lengthAdjust="spacingAndGlyphs" >Minor axis (km)</text>
<text x="712.8" y="116" font-family="Liberation Sans" font-size="11.5" font-weight="normal" font-style="normal" fill="#000" text-anchor="start" textLength="52.5" lengthAdjust="spacingAndGlyphs" >Orientation</text>
<rect x="771" y="9.2" width="58" height="19.4" fill="#abadb3" />
<rect x="772" y="10.2" width="56" height="17.4" fill="#ffffff" />
<rect x="813" y="11.2" width="14" height="7.2" fill="#e6e6e6" stroke="#c8c8c8" stroke-width="0.8"/>
<rect x="813" y="19.4" width="14" height="7.2" fill="#e6e6e6" stroke="#c8c8c8" stroke-width="0.8"/>
<path d="M816.5 15.9 L820 12.4 L823.5 15.9Z" fill="#4d6185"/>
<path d="M816.5 21.9 L820 25.4 L823.5 21.9Z" fill="#4d6185"/>
<text x="772.8" y="22.4" font-family="Liberation Sans" font-size="11.5" font-weight="normal" font-style="normal" fill="#000" text-anchor="start" >-0.2</text>
<rect x="771" y="31" width="58" height="19.7" fill="#abadb3" />
<rect x="772" y="32" width="56" height="17.7" fill="#ffffff" />
<rect x="813" y="33" width="14" height="7.35" fill="#e6e6e6" stroke="#c8c8c8" stroke-width="0.8"/>
<rect x="813" y="41.35" width="14" height="7.35" fill="#e6e6e6" stroke="#c8c8c8" stroke-width="0.8"/>
<path d="M816.5 37.85 L820 34.35 L823.5 37.85Z" fill="#4d6185"/>
<path d="M816.5 43.85 L820 47.35 L823.5 43.85Z" fill="#4d6185"/>
<text x="772.8" y="44.2" font-family="Liberation Sans" font-size="11.5" font-weight="normal" font-style="normal" fill="#000" text-anchor="start" >-5.8</text>
<rect x="771" y="58" width="58" height="19.8" fill="#abadb3" />
<rect x="772" y="59" width="56" height="17.8" fill="#ffffff" />
<rect x="813" y="60" width="14" height="7.4" fill="#e6e6e6" stroke="#c8c8c8" stroke-width="0.8"/>
<rect x="813" y="68.4" width="14" height="7.4" fill="#e6e6e6" stroke="#c8c8c8" stroke-width="0.8"/>
<path d="M816.5 64.9 L820 61.4 L823.5 64.9Z" fill="#4d6185"/>
<path d="M816.5 70.9 L820 74.4 L823.5 70.9Z" fill="#4d6185"/>
<text x="772.8" y="71.2" font-family="Liberation Sans" font-size="11.5" font-weight="normal" font-style="normal" fill="#000" text-anchor="start" >131.8</text>
<rect x="771" y="80.2" width="58" height="19.2" fill="#abadb3" />
<rect x="772" y="81.2" width="56" height="17.2" fill="#ffffff" />
<rect x="813" y="82.2" width="14" height="7.1" fill="#e6e6e6" stroke="#c8c8c8" stroke-width="0.8"/>
<rect x="813" y="90.3" width="14" height="7.1" fill="#e6e6e6" stroke="#c8c8c8" stroke-width="0.8"/>
<path d="M816.5 86.8 L820 83.3 L823.5 86.8Z" fill="#4d6185"/>
<path d="M816.5 92.8 L820 96.3 L823.5 92.8Z" fill="#4d6185"/>
<text x="772.8" y="93.4" font-family="Liberation Sans" font-size="11.5" font-weight="normal" font-style="normal" fill="#000" text-anchor="start" >115.9</text>
<rect x="771" y="102" width="58" height="19.6" fill="#abadb3" />
<rect x="772" y="103" width="56" height="17.6" fill="#ffffff" />
<rect x="813" y="104" width="14" height="7.3" fill="#e6e6e6" stroke="#c8c8c8" stroke-width="0.8"/>
<rect x="813" y="112.3" width="14" height="7.3" fill="#e6e6e6" stroke="#c8c8c8" stroke-width="0.8"/>
<path d="M816.5 108.8 L820 105.3 L823.5 108.8Z" fill="#4d6185"/>
<path d="M816.5 114.8 L820 118.3 L823.5 114.8Z" fill="#4d6185"/>
<text x="772.8" y="115.2" font-family="Liberation Sans" font-size="11.5" font-weight="normal" font-style="normal" fill="#000" text-anchor="start" >31.0</text>
<rect x="841.3" y="12.3" width="12.5" height="12.5" fill="#8e8f8f" />
<rect x="842.3" y="13.3" width="10.5" height="10.5" fill="#f4f4f4" />
<rect x="843.8" y="14.8" width="7.5" height="7.5" fill="url(#cbg)"/>
<path d="M844.5 18.6 L846.8 21.5 L850.9 15.1" fill="none" stroke="#3b4f8f" stroke-width="1.7"/>
<text x="859.5" y="22.9" font-family="Liberation Sans" font-size="11.5" font-weight="normal" font-style="normal" fill="#000" text-anchor="start" textLength="15.5" lengthAdjust="spacingAndGlyphs" >0.1</text>
<rect x="841.3" y="34.2" width="12.5" height="12.5" fill="#8e8f8f" />
<rect x="842.3" y="35.2" width="10.5" height="10.5" fill="#f4f4f4" />
<rect x="843.8" y="36.7" width="7.5" height="7.5" fill="url(#cbg)"/>
<path d="M844.5 40.5 L846.8 43.4 L850.9 37" fill="none" stroke="#3b4f8f" stroke-width="1.7"/>
<text x="859.5" y="44.8" font-family="Liberation Sans" font-size="11.5" font-weight="normal" font-style="normal" fill="#000" text-anchor="start" textLength="15.5" lengthAdjust="spacingAndGlyphs" >0.0</text>
<rect x="841.3" y="61.5" width="12.5" height="12.5" fill="#8e8f8f" />
<rect x="842.3" y="62.5" width="10.5" height="10.5" fill="#f4f4f4" />
<rect x="843.8" y="64" width="7.5" height="7.5" fill="url(#cbg)"/>
<path d="M844.5 67.8 L846.8 70.7 L850.9 64.3" fill="none" stroke="#3b4f8f" stroke-width="1.7"/>
<text x="859.5" y="72.1" font-family="Liberation Sans" font-size="11.5" font-weight="normal" font-style="normal" fill="#000" text-anchor="start" textLength="15.5" lengthAdjust="spacingAndGlyphs" >0.1</text>
<rect x="841.3" y="83.4" width="12.5" height="12.5" fill="#8e8f8f" />
<rect x="842.3" y="84.4" width="10.5" height="10.5" fill="#f4f4f4" />
<rect x="843.8" y="85.9" width="7.5" height="7.5" fill="url(#cbg)"/>
<path d="M844.5 89.7 L846.8 92.6 L850.9 86.2" fill="none" stroke="#3b4f8f" stroke-width="1.7"/>
<text x="859.5" y="94" font-family="Liberation Sans" font-size="11.5" font-weight="normal" font-style="normal" fill="#000" text-anchor="start" textLength="15.5" lengthAdjust="spacingAndGlyphs" >0.0</text>
<rect x="841.3" y="105.4" width="12.5" height="12.5" fill="#8e8f8f" />
<rect x="842.3" y="106.4" width="10.5" height="10.5" fill="#f4f4f4" />
<rect x="843.8" y="107.9" width="7.5" height="7.5" fill="url(#cbg)"/>
<path d="M844.5 111.7 L846.8 114.6 L850.9 108.2" fill="none" stroke="#3b4f8f" stroke-width="1.7"/>
<text x="859.5" y="116" font-family="Liberation Sans" font-size="11.5" font-weight="normal" font-style="normal" fill="#000" text-anchor="start" textLength="15.5" lengthAdjust="spacingAndGlyphs" >7.4</text>
<rect x="838.3" y="121" width="18.5" height="7.6" fill="#ffffff" rx="3.5" stroke="#8a8a8a" stroke-width="1"/>
<rect x="841" y="123.8" width="13" height="2" fill="#ff0000" />
<text x="901.8" y="23.9" font-family="Liberation Sans" font-size="11.5" font-weight="normal" font-style="normal" fill="#000" text-anchor="start" textLength="36" lengthAdjust="spacingAndGlyphs" >Mass X</text>
<text x="901.8" y="45.5" font-family="Liberation Sans" font-size="11.5" font-weight="normal" font-style="normal" fill="#000" text-anchor="start" textLength="36" lengthAdjust="spacingAndGlyphs" >Mass Y</text>
<rect x="943.2" y="9.1" width="57.8" height="19.2" fill="#abadb3" />
<rect x="944.2" y="10.1" width="55.8" height="17.2" fill="#ffffff" />
<rect x="985" y="11.1" width="14" height="7.1" fill="#e6e6e6" stroke="#c8c8c8" stroke-width="0.8"/>
<rect x="985" y="19.2" width="14" height="7.1" fill="#e6e6e6" stroke="#c8c8c8" stroke-width="0.8"/>
<path d="M988.5 15.7 L992 12.2 L995.5 15.7Z" fill="#4d6185"/>
<path d="M988.5 21.7 L992 25.2 L995.5 21.7Z" fill="#4d6185"/>
<text x="945" y="22.3" font-family="Liberation Sans" font-size="11.5" font-weight="normal" font-style="normal" fill="#000" text-anchor="start" >0.0</text>
<rect x="943.2" y="31.4" width="57.8" height="18.8" fill="#abadb3" />
<rect x="944.2" y="32.4" width="55.8" height="16.8" fill="#ffffff" />
<rect x="985" y="33.4" width="14" height="6.9" fill="#e6e6e6" stroke="#c8c8c8" stroke-width="0.8"/>
<rect x="985" y="41.3" width="14" height="6.9" fill="#e6e6e6" stroke="#c8c8c8" stroke-width="0.8"/>
<path d="M988.5 37.8 L992 34.3 L995.5 37.8Z" fill="#4d6185"/>
<path d="M988.5 43.8 L992 47.3 L995.5 43.8Z" fill="#4d6185"/>
<text x="945" y="44.6" font-family="Liberation Sans" font-size="11.5" font-weight="normal" font-style="normal" fill="#000" text-anchor="start" >0.0</text>
<text x="934.7" y="58.7" font-family="Liberation Sans" font-size="9" font-weight="normal" font-style="normal" fill="#a0a0a0" text-anchor="start" textLength="44" lengthAdjust="spacingAndGlyphs">Shape model</text>
<rect x="986" y="52" width="14" height="11.5" fill="#f4f4f4" stroke="#aaaaaa" stroke-width="1"/>
<text x="916.5" y="75.5" font-family="Liberation Sans" font-size="11.5" font-weight="normal" font-style="normal" fill="#1e7a1e" text-anchor="start" textLength="69.7" lengthAdjust="spacingAndGlyphs" >dia = 123.6 km</text>
<text x="897.7" y="89.7" font-family="Liberation Sans" font-size="11.5" font-weight="normal" font-style="normal" fill="#2020e0" text-anchor="start" textLength="105.8" lengthAdjust="spacingAndGlyphs" >a/b: 1.14, dMag: 0.15</text>
<text x="901.8" y="119.4" font-family="Liberation Sans" font-size="11.5" font-weight="normal" font-style="normal" fill="#000" text-anchor="start" textLength="89.7" lengthAdjust="spacingAndGlyphs" >Motion: 14.03 km/s</text>
<rect x="675.2" y="132.3" width="12.5" height="12.5" fill="#8e8f8f" />
<rect x="676.2" y="133.3" width="10.5" height="10.5" fill="#f4f4f4" />
<rect x="677.7" y="134.8" width="7.5" height="7.5" fill="url(#cbg)"/>
<text x="693.1" y="142.6" font-family="Liberation Sans" font-size="11.5" font-weight="normal" font-style="normal" fill="#000" text-anchor="start" textLength="36.3" lengthAdjust="spacingAndGlyphs" >Circular</text>
<rect x="741.2" y="132.3" width="12.5" height="12.5" fill="#8e8f8f" />
<rect x="742.2" y="133.3" width="10.5" height="10.5" fill="#f4f4f4" />
<rect x="743.7" y="134.8" width="7.5" height="7.5" fill="url(#cbg)"/>
<text x="759.9" y="135.5" font-family="Liberation Sans" font-size="11" font-weight="normal" font-style="normal" fill="#000" text-anchor="start" textLength="62.9" lengthAdjust="spacingAndGlyphs" >Use assumed</text>
<text x="759.9" y="148.2" font-family="Liberation Sans" font-size="11" font-weight="normal" font-style="normal" fill="#000" text-anchor="start" textLength="54.6" lengthAdjust="spacingAndGlyphs" >dia (0.0 km)</text>
<rect x="843.3" y="132.2" width="12.5" height="12.5" fill="#8e8f8f" />
<rect x="844.3" y="133.2" width="10.5" height="10.5" fill="#f4f4f4" />
<rect x="845.8" y="134.7" width="7.5" height="7.5" fill="url(#cbg)"/>
<path d="M846.5 138.5 L848.8 141.4 L852.9 135" fill="none" stroke="#3b4f8f" stroke-width="1.7"/>
<text x="861.8" y="142.9" font-family="Liberation Sans" font-size="11.5" font-weight="normal" font-style="normal" fill="#000" text-anchor="start" textLength="94.1" lengthAdjust="spacingAndGlyphs" >Include Miss events</text>
<rect x="673.4" y="158.4" width="318.6" height="20.8" fill="#ffffff" />
<rect x="673.4" y="158.4" width="318.6" height="19.8" fill="#a0a0a0" />
<rect x="675.4" y="160.4" width="316.6" height="17.8" fill="#f0f0f0" />
<text x="681.5" y="172.5" font-family="Liberation Sans" font-size="12.5" font-weight="bold" font-style="normal" fill="#a3a3a3" text-anchor="start" textLength="111.7" lengthAdjust="spacingAndGlyphs" >Double stars - show</text>
<circle cx="812.8" cy="170.2" r="5.8" fill="url(#rbg)" stroke="#b0b0b0" stroke-width="1"/>
<circle cx="812.8" cy="170.2" r="3" fill="#a8a8a8"/>
<text x="824.5" y="173.9" font-family="Liberation Sans" font-size="11" font-weight="normal" font-style="normal" fill="#a8a8a8" text-anchor="start" textLength="20" lengthAdjust="spacingAndGlyphs" >Both</text>
<circle cx="865" cy="170.2" r="5.8" fill="url(#rbg)" stroke="#b0b0b0" stroke-width="1"/>
<text x="876.7" y="173.9" font-family="Liberation Sans" font-size="11" font-weight="normal" font-style="normal" fill="#a8a8a8" text-anchor="start" textLength="32.3" lengthAdjust="spacingAndGlyphs" >Primary</text>
<circle cx="930.1" cy="170.2" r="5.8" fill="url(#rbg)" stroke="#b0b0b0" stroke-width="1"/>
<text x="941.2" y="173.9" font-family="Liberation Sans" font-size="11" font-weight="normal" font-style="normal" fill="#a8a8a8" text-anchor="start" textLength="44.8" lengthAdjust="spacingAndGlyphs" >Secondary</text>
<text x="673.2" y="199.7" font-family="Liberation Sans" font-size="12.5" font-weight="bold" font-style="normal" fill="#0b6a0b" text-anchor="start" textLength="91.5" lengthAdjust="spacingAndGlyphs" >Quality of the fit</text>
<rect x="774.5" y="186" width="212.5" height="19.4" fill="#c5c5c5" />
<rect x="775.5" y="187" width="210.5" height="17.4" fill="#ffffff" />
<rect x="777" y="188.5" width="191" height="15" fill="#ffff00" />
<text x="776.6" y="198.8" font-family="Liberation Sans" font-size="11.5" font-weight="normal" font-style="normal" fill="#000" text-anchor="start" textLength="122.2" lengthAdjust="spacingAndGlyphs" >No reliable position or size</text>
<path d="M975.5 194 L983.5 194 L979.5 198.5Z" fill="#000"/>
<rect x="774" y="209.1" width="124.6" height="16.3" fill="#add8e6" />
<rect x="775.5" y="211" width="12.5" height="12.5" fill="#8e8f8f" />
<rect x="776.5" y="212" width="10.5" height="10.5" fill="#f4f4f4" />
<rect x="778" y="213.5" width="7.5" height="7.5" fill="url(#cbg)"/>
<text x="793.2" y="220.3" font-family="Liberation Sans" font-size="11.5" font-weight="normal" font-style="italic" fill="#000" text-anchor="start" textLength="99.9" lengthAdjust="spacingAndGlyphs" >Flag for future review</text>
<rect x="664.3" y="229.7" width="327.7" height="80.9" fill="#ffffff" />
<rect x="664.3" y="229.7" width="327.7" height="79.9" fill="#646464" />
<rect x="666.3" y="231.7" width="325.7" height="77.9" fill="#f0ffff" />
<text x="676" y="255.6" font-family="Liberation Sans" font-size="12.5" font-weight="bold" font-style="normal" fill="#7a0a0a" text-anchor="middle" >P</text>
<text x="676" y="268.5" font-family="Liberation Sans" font-size="12.5" font-weight="bold" font-style="normal" fill="#7a0a0a" text-anchor="middle" >L</text>
<text x="676" y="281.5" font-family="Liberation Sans" font-size="12.5" font-weight="bold" font-style="normal" fill="#7a0a0a" text-anchor="middle" >O</text>
<text x="676" y="295.2" font-family="Liberation Sans" font-size="12.5" font-weight="bold" font-style="normal" fill="#7a0a0a" text-anchor="middle" >T</text>
<text x="691.9" y="251.6" font-family="Liberation Sans" font-size="12.5" font-weight="bold" font-style="normal" fill="#7a0a0a" text-anchor="start" textLength="32.1" lengthAdjust="spacingAndGlyphs" >Scale</text>
<rect x="730.8" y="238.2" width="261.2" height="18.8" fill="#fdf8d8" />
<rect x="736" y="243.5" width="256" height="2.5" fill="#e2e2e2" stroke="#b8b8b8" stroke-width="0.8"/>
<rect x="739" y="253" width="1" height="2.5" fill="#a0a0a0" />
<rect x="751.6" y="253" width="1" height="2.5" fill="#a0a0a0" />
<rect x="764.2" y="253" width="1" height="2.5" fill="#a0a0a0" />
<rect x="776.8" y="253" width="1" height="2.5" fill="#a0a0a0" />
<rect x="789.4" y="253" width="1" height="2.5" fill="#a0a0a0" />
<rect x="802" y="253" width="1" height="2.5" fill="#a0a0a0" />
<rect x="814.6" y="253" width="1" height="2.5" fill="#a0a0a0" />
<rect x="827.2" y="253" width="1" height="2.5" fill="#a0a0a0" />
<rect x="839.8" y="253" width="1" height="2.5" fill="#a0a0a0" />
<rect x="852.4" y="253" width="1" height="2.5" fill="#a0a0a0" />
<rect x="865" y="253" width="1" height="2.5" fill="#a0a0a0" />
<rect x="877.6" y="253" width="1" height="2.5" fill="#a0a0a0" />
<rect x="890.2" y="253" width="1" height="2.5" fill="#a0a0a0" />
<rect x="902.8" y="253" width="1" height="2.5" fill="#a0a0a0" />
<rect x="915.4" y="253" width="1" height="2.5" fill="#a0a0a0" />
<rect x="928" y="253" width="1" height="2.5" fill="#a0a0a0" />
<rect x="940.6" y="253" width="1" height="2.5" fill="#a0a0a0" />
<rect x="953.2" y="253" width="1" height="2.5" fill="#a0a0a0" />
<rect x="965.8" y="253" width="1" height="2.5" fill="#a0a0a0" />
<rect x="978.4" y="253" width="1" height="2.5" fill="#a0a0a0" />
<rect x="991" y="253" width="1" height="2.5" fill="#a0a0a0" />
<path d="M862 240.5 H868 V247.5 L865 250 L862 247.5Z" fill="#f4f4f4" stroke="#8a8a8a" stroke-width="0.9"/>
<text x="691.9" y="277.4" font-family="Liberation Sans" font-size="12.5" font-weight="bold" font-style="normal" fill="#7a0a0a" text-anchor="start" textLength="24.1" lengthAdjust="spacingAndGlyphs" >Size</text>
<rect x="722.4" y="263.7" width="162.2" height="21.8" fill="#ffffff" />
<rect x="722.4" y="263.7" width="162.2" height="20.8" fill="#7a7a7a" />
<rect x="724.4" y="265.7" width="160.2" height="18.8" fill="#f0fff0" />
<circle cx="737.7" cy="275" r="5.8" fill="url(#rbg)" stroke="#8a8a8a" stroke-width="1"/>
<circle cx="737.7" cy="275" r="3.2" fill="#1c6fb8"/>
<circle cx="736.9" cy="274.2" r="1.2" fill="#7fd0ff"/>
<text x="750.1" y="277.7" font-family="Liberation Sans" font-size="12.5" font-weight="bold" font-style="normal" fill="#7a0a0a" text-anchor="start" textLength="37.4" lengthAdjust="spacingAndGlyphs" >normal</text>
<circle cx="801.7" cy="275" r="5.8" fill="url(#rbg)" stroke="#8a8a8a" stroke-width="1"/>
<text x="813.5" y="277.7" font-family="Liberation Sans" font-size="12.5" font-weight="bold" font-style="normal" fill="#7a0a0a" text-anchor="start" textLength="19" lengthAdjust="spacingAndGlyphs" >x 2</text>
<circle cx="845.9" cy="275" r="5.8" fill="url(#rbg)" stroke="#8a8a8a" stroke-width="1"/>
<text x="857.5" y="277.7" font-family="Liberation Sans" font-size="12.5" font-weight="bold" font-style="normal" fill="#7a0a0a" text-anchor="start" textLength="19.4" lengthAdjust="spacingAndGlyphs" >x 5</text>
<text x="906.9" y="278.2" font-family="Liberation Sans" font-size="12.5" font-weight="bold" font-style="normal" fill="#800080" text-anchor="start" textLength="72.6" lengthAdjust="spacingAndGlyphs" >Form opacity</text>
<text x="692.9" y="303.2" font-family="Liberation Sans" font-size="12.5" font-weight="bold" font-style="normal" fill="#7a0a0a" text-anchor="start" textLength="103.7" lengthAdjust="spacingAndGlyphs" >Scroll range x1.25</text>
<rect x="804.3" y="293" width="12.5" height="12.5" fill="#8e8f8f" />
<rect x="805.3" y="294" width="10.5" height="10.5" fill="#f4f4f4" />
<rect x="806.8" y="295.5" width="7.5" height="7.5" fill="url(#cbg)"/>
<rect x="886.1" y="286.5" width="105.9" height="19.8" fill="#fdf8d8" />
<rect x="892" y="292" width="100" height="2.5" fill="#e2e2e2" stroke="#b8b8b8" stroke-width="0.8"/>
<rect x="896" y="302" width="1" height="3" fill="#a0a0a0" />
<rect x="915" y="302" width="1" height="3" fill="#a0a0a0" />
<rect x="934" y="302" width="1" height="3" fill="#a0a0a0" />
<rect x="953" y="302" width="1" height="3" fill="#a0a0a0" />
<rect x="972" y="302" width="1" height="3" fill="#a0a0a0" />
<path d="M986 288.5 H993 V297 L989.5 299.5 L986 297Z" fill="#f4f4f4" stroke="#8a8a8a" stroke-width="0.9"/>
<text x="677.5" y="332" font-family="Liberation Sans" font-size="11.5" font-weight="normal" font-style="normal" fill="#000" text-anchor="start" textLength="94.2" lengthAdjust="spacingAndGlyphs" >RMS fit 0.4 ±1.7 km</text>
<rect x="670.8" y="342.5" width="329.2" height="282.5" fill="#ffffff" />
<rect x="670.8" y="342.5" width="329.2" height="281.5" fill="#828282" />
<rect x="672.3" y="344" width="327.7" height="280" fill="#ffffff" />
<line x1="678.5" y1="351" x2="741.5" y2="351" stroke="#4b0082" stroke-width="3" stroke-linecap="round"/>
<text x="766.1" y="355.8" font-family="Liberation Mono" font-size="11.2" font-weight="normal" font-style="normal" fill="#000" text-anchor="start" textLength="8.1" lengthAdjust="spacingAndGlyphs">1</text>
<text x="806.6" y="355.8" font-family="Liberation Mono" font-size="11.2" font-weight="normal" font-style="normal" fill="#000" text-anchor="start" textLength="186.3" lengthAdjust="spacingAndGlyphs">Nigel Wakefield, near B</text>
<line x1="678.5" y1="363" x2="741.5" y2="363" stroke="#ff0000" stroke-width="3" stroke-linecap="round"/>
<text x="766.1" y="367.8" font-family="Liberation Mono" font-size="11.2" font-weight="normal" font-style="normal" fill="#000" text-anchor="start" textLength="8.1" lengthAdjust="spacingAndGlyphs">2</text>
<text x="806.6" y="367.8" font-family="Liberation Mono" font-size="11.2" font-weight="normal" font-style="normal" fill="#000" text-anchor="start" textLength="186.3" lengthAdjust="spacingAndGlyphs">Henk De Groot, near Omm</text>
<line x1="678.5" y1="375" x2="741.5" y2="375" stroke="#0000ff" stroke-width="3" stroke-linecap="round"/>
<text x="766.1" y="379.8" font-family="Liberation Mono" font-size="11.2" font-weight="normal" font-style="normal" fill="#000" text-anchor="start" textLength="8.1" lengthAdjust="spacingAndGlyphs">3</text>
<text x="806.6" y="379.8" font-family="Liberation Mono" font-size="11.2" font-weight="normal" font-style="normal" fill="#000" text-anchor="start" textLength="186.3" lengthAdjust="spacingAndGlyphs">Malcolm Jennings, near </text>
<line x1="678.5" y1="387" x2="741.5" y2="387" stroke="#8a2be2" stroke-width="3" stroke-linecap="round"/>
<text x="766.1" y="391.8" font-family="Liberation Mono" font-size="11.2" font-weight="normal" font-style="normal" fill="#000" text-anchor="start" textLength="8.1" lengthAdjust="spacingAndGlyphs">4</text>
<text x="806.6" y="391.8" font-family="Liberation Mono" font-size="11.2" font-weight="normal" font-style="normal" fill="#000" text-anchor="start" textLength="186.3" lengthAdjust="spacingAndGlyphs">Philip Denyer, near Lon</text>
<line x1="678.5" y1="399" x2="741.5" y2="399" stroke="#a52a2a" stroke-width="3" stroke-linecap="round"/>
<text x="766.1" y="403.8" font-family="Liberation Mono" font-size="11.2" font-weight="normal" font-style="normal" fill="#000" text-anchor="start" textLength="8.1" lengthAdjust="spacingAndGlyphs">5</text>
<text x="806.6" y="403.8" font-family="Liberation Mono" font-size="11.2" font-weight="normal" font-style="normal" fill="#000" text-anchor="start" textLength="186.3" lengthAdjust="spacingAndGlyphs">Luke Broom-Lynne, near </text>
<line x1="678.5" y1="415" x2="741.5" y2="415" stroke="#5f9ea0" stroke-width="3" stroke-linecap="round"/>
<text x="766.1" y="419.8" font-family="Liberation Mono" font-size="11.2" font-weight="normal" font-style="normal" fill="#000" text-anchor="start" textLength="8.1" lengthAdjust="spacingAndGlyphs">6</text>
<text x="806.6" y="419.8" font-family="Liberation Mono" font-size="11.2" font-weight="normal" font-style="normal" fill="#000" text-anchor="start" textLength="186.3" lengthAdjust="spacingAndGlyphs">Peter Tickner, near Rea</text>
<line x1="678.5" y1="427" x2="741.5" y2="427" stroke="#dc143c" stroke-width="3" stroke-linecap="round"/>
<text x="766.1" y="431.8" font-family="Liberation Mono" font-size="11.2" font-weight="normal" font-style="normal" fill="#000" text-anchor="start" textLength="8.1" lengthAdjust="spacingAndGlyphs">7</text>
<text x="806.6" y="431.8" font-family="Liberation Mono" font-size="11.2" font-weight="normal" font-style="normal" fill="#000" text-anchor="start" textLength="186.3" lengthAdjust="spacingAndGlyphs">Kenneth Harrison, near </text>
<line x1="678.5" y1="439" x2="741.5" y2="439" stroke="#7cfc00" stroke-width="3" stroke-linecap="round"/>
<text x="766.1" y="443.8" font-family="Liberation Mono" font-size="11.2" font-weight="normal" font-style="normal" fill="#000" text-anchor="start" textLength="8.1" lengthAdjust="spacingAndGlyphs">8</text>
<text x="806.6" y="443.8" font-family="Liberation Mono" font-size="11.2" font-weight="normal" font-style="normal" fill="#000" text-anchor="start" textLength="186.3" lengthAdjust="spacingAndGlyphs">Tim Haymes, near Oxford</text>
<line x1="678.5" y1="451" x2="741.5" y2="451" stroke="#ff7f50" stroke-width="3" stroke-linecap="round"/>
<text x="766.1" y="455.8" font-family="Liberation Mono" font-size="11.2" font-weight="normal" font-style="normal" fill="#000" text-anchor="start" textLength="8.1" lengthAdjust="spacingAndGlyphs">9</text>
<text x="806.6" y="455.8" font-family="Liberation Mono" font-size="11.2" font-weight="normal" font-style="normal" fill="#000" text-anchor="start" textLength="186.3" lengthAdjust="spacingAndGlyphs">Konrad Guhl, near Wokuh</text>
<line x1="678.5" y1="463" x2="741.5" y2="463" stroke="#6495ed" stroke-width="3" stroke-linecap="round"/>
<text x="758" y="467.8" font-family="Liberation Mono" font-size="11.2" font-weight="normal" font-style="normal" fill="#000" text-anchor="start" textLength="16.2" lengthAdjust="spacingAndGlyphs">10</text>
<text x="806.6" y="467.8" font-family="Liberation Mono" font-size="11.2" font-weight="normal" font-style="normal" fill="#000" text-anchor="start" textLength="186.3" lengthAdjust="spacingAndGlyphs">Peter Birtwhistle, near</text>
<line x1="678.5" y1="479" x2="741.5" y2="479" stroke="#ff00ff" stroke-width="3" stroke-linecap="round"/>
<text x="758" y="483.8" font-family="Liberation Mono" font-size="11.2" font-weight="normal" font-style="normal" fill="#000" text-anchor="start" textLength="16.2" lengthAdjust="spacingAndGlyphs">11</text>
<text x="806.6" y="483.8" font-family="Liberation Mono" font-size="11.2" font-weight="normal" font-style="normal" fill="#000" text-anchor="start" textLength="186.3" lengthAdjust="spacingAndGlyphs">John Talbot, near Abing</text>
<line x1="678.5" y1="491" x2="741.5" y2="491" stroke="#daa520" stroke-width="3" stroke-linecap="round"/>
<text x="758" y="495.8" font-family="Liberation Mono" font-size="11.2" font-weight="normal" font-style="normal" fill="#000" text-anchor="start" textLength="16.2" lengthAdjust="spacingAndGlyphs">12</text>
<text x="806.6" y="495.8" font-family="Liberation Mono" font-size="11.2" font-weight="normal" font-style="normal" fill="#000" text-anchor="start" textLength="186.3" lengthAdjust="spacingAndGlyphs">Derrick Ward, near Swin</text>
<rect x="672.3" y="608" width="327.7" height="16" fill="url(#sbh)" />
<path d="M683 612.5 L679 616 L683 619.5Z" fill="#404040"/>
<path d="M987 612.5 L991 616 L987 619.5Z" fill="#404040"/>
<rect x="690.4" y="608.8" width="198" height="14.7" fill="url(#thh)" stroke="#9a9a9a" stroke-width="0.9" rx="2"/>
<rect x="785.5" y="613" width="1" height="6" fill="#505050" />
<rect x="788" y="613" width="1" height="6" fill="#505050" />
<rect x="790.5" y="613" width="1" height="6" fill="#505050" />
</svg></div></body></html>
